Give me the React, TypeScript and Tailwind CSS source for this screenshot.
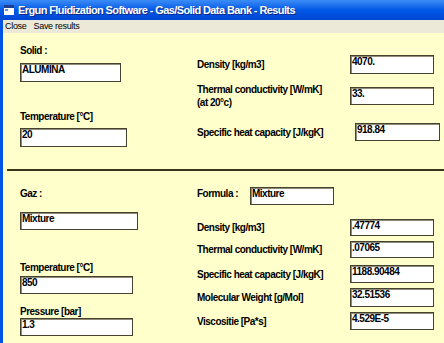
const UPPER_RIGHT = [
  { label: ["Density [kg/m3]"], value: "4070.", mt: "mt-[22px]", h: "h-[19px]", shift: "" },
  { label: ["Thermal conductivity [W/mK]", "(at 20°c)"], value: "33.", mt: "mt-[13px]", h: "h-[18px]", shift: "" },
  { label: ["Specific heat capacity [J/kgK]"], value: "918.84", mt: "mt-[18px]", h: "h-[18px]", shift: "ml-[5px] w-[85px]" },
];

const LOWER_RIGHT = [
  { label: "Density [kg/m3]", value: ".47774", mt: "mt-[14px]", h: "h-[17px]" },
  { label: "Thermal conductivity [W/mK]", value: ".07065", mt: "mt-[5px]", h: "h-[17px]" },
  { label: "Specific heat capacity [J/kgK]", value: "1188.90484", mt: "mt-[7px]", h: "h-[18px]" },
  { label: "Molecular Weight [g/Mol]", value: "32.51536", mt: "mt-[5px]", h: "h-[19px]" },
  { label: "Viscositie [Pa*s]", value: "4.529E-5", mt: "mt-[5px]", h: "h-[18px]" },
];

function Field({ value, className }: { value: string; className: string }) {
  return (
    <div
      className={`shrink-0 border border-[#45432f] bg-white pl-[1px] text-[10px] font-bold leading-[12px] tracking-[-0.5px] text-black shadow-[inset_1px_1px_0_#8e8c78] ${className}`}
    >
      {value}
    </div>
  );
}

function Label({ children, className = "" }: { children: React.ReactNode; className?: string }) {
  return (
    <div className={`text-[10px] font-bold leading-[13px] tracking-[-0.5px] text-black ${className}`}>
      {children}
    </div>
  );
}

export default function App() {
  return (
    <div className="flex h-[343px] w-[444px] flex-col overflow-hidden font-['Liberation_Sans',Arial,sans-serif]">
      {/* title bar */}
      <div className="flex h-[20px] shrink-0 items-center gap-[4px] bg-gradient-to-b from-[#3a8cf6] via-[#0058e6] to-[#0046d2] pl-[4px]">
        <svg width="10" height="10" viewBox="0 0 10 10">
          <rect x="0" y="0" width="10" height="10" fill="#ffffff" />
          <rect x="0" y="0" width="10" height="3" fill="#1c3f94" />
          <rect x="1" y="4" width="3" height="2" fill="#6b8fd8" />
        </svg>
        <span className="text-[11px] font-bold tracking-[-0.6px] text-white [text-shadow:1px_1px_0_#0a2a88]">
          Ergun Fluidization Software - Gas/Solid Data Bank - Results
        </span>
      </div>

      <div className="flex flex-1 border-l-[3px] border-[#0054e3]">
        <div className="flex flex-1 flex-col">
          {/* menu bar */}
          <div className="flex h-[13px] shrink-0 items-center gap-[7px] bg-[#ece9d8] pl-[2px] text-[9px] leading-[13px] tracking-[-0.3px] text-black">
            <span>Close</span>
            <span>Save results</span>
          </div>

          <div className="flex flex-1 flex-col bg-[#ffffcc]">
            {/* solid section */}
            <div className="flex h-[136px] shrink-0">
              <div className="flex w-[194px] shrink-0 flex-col pl-[17px]">
                <Label className="mt-[11px]">Solid :</Label>
                <Field value="ALUMINA" className="mt-[6px] h-[19px] w-[101px]" />
                <Label className="mt-[28px]">Temperature [°C]</Label>
                <Field value="20" className="mt-[5px] h-[19px] w-[107px]" />
              </div>
              <div className="flex flex-col">
                {UPPER_RIGHT.map((r) => (
                  <div key={r.value} className={`flex items-center ${r.mt} ${r.h}`}>
                    <div className="w-[153px] shrink-0">
                      {r.label.map((l) => (
                        <Label key={l} className="leading-[11px]">
                          {l}
                        </Label>
                      ))}
                    </div>
                    <Field value={r.value} className={`h-full ${r.shift || "w-[84px]"}`} />
                  </div>
                ))}
              </div>
            </div>

            <div className="ml-[4px] h-[2px] shrink-0 bg-[#3a3418]" />

            {/* gas section */}
            <div className="flex">
              <div className="flex w-[194px] shrink-0 flex-col pl-[17px]">
                <Label className="mt-[16px]">Gaz :</Label>
                <Field value="Mixture" className="mt-[12px] h-[18px] w-[118px]" />
                <Label className="mt-[31px]">Temperature [°C]</Label>
                <Field value="850" className="mt-[2px] h-[18px] w-[113px]" />
                <Label className="mt-[11px]">Pressure [bar]</Label>
                <Field value="1.3" className="h-[18px] w-[113px]" />
              </div>
              <div className="flex flex-col">
                <div className="mt-[16px] flex h-[18px] items-start">
                  <Label className="w-[53px] shrink-0">Formula :</Label>
                  <Field value="Mixture" className="h-full w-[84px]" />
                </div>
                {LOWER_RIGHT.map((r) => (
                  <div key={r.value} className={`flex items-center ${r.mt} ${r.h}`}>
                    <Label className="w-[153px] shrink-0">{r.label}</Label>
                    <Field value={r.value} className="h-full w-[84px]" />
                  </div>
                ))}
              </div>
            </div>
          </div>
        </div>
      </div>
    </div>
  );
}
